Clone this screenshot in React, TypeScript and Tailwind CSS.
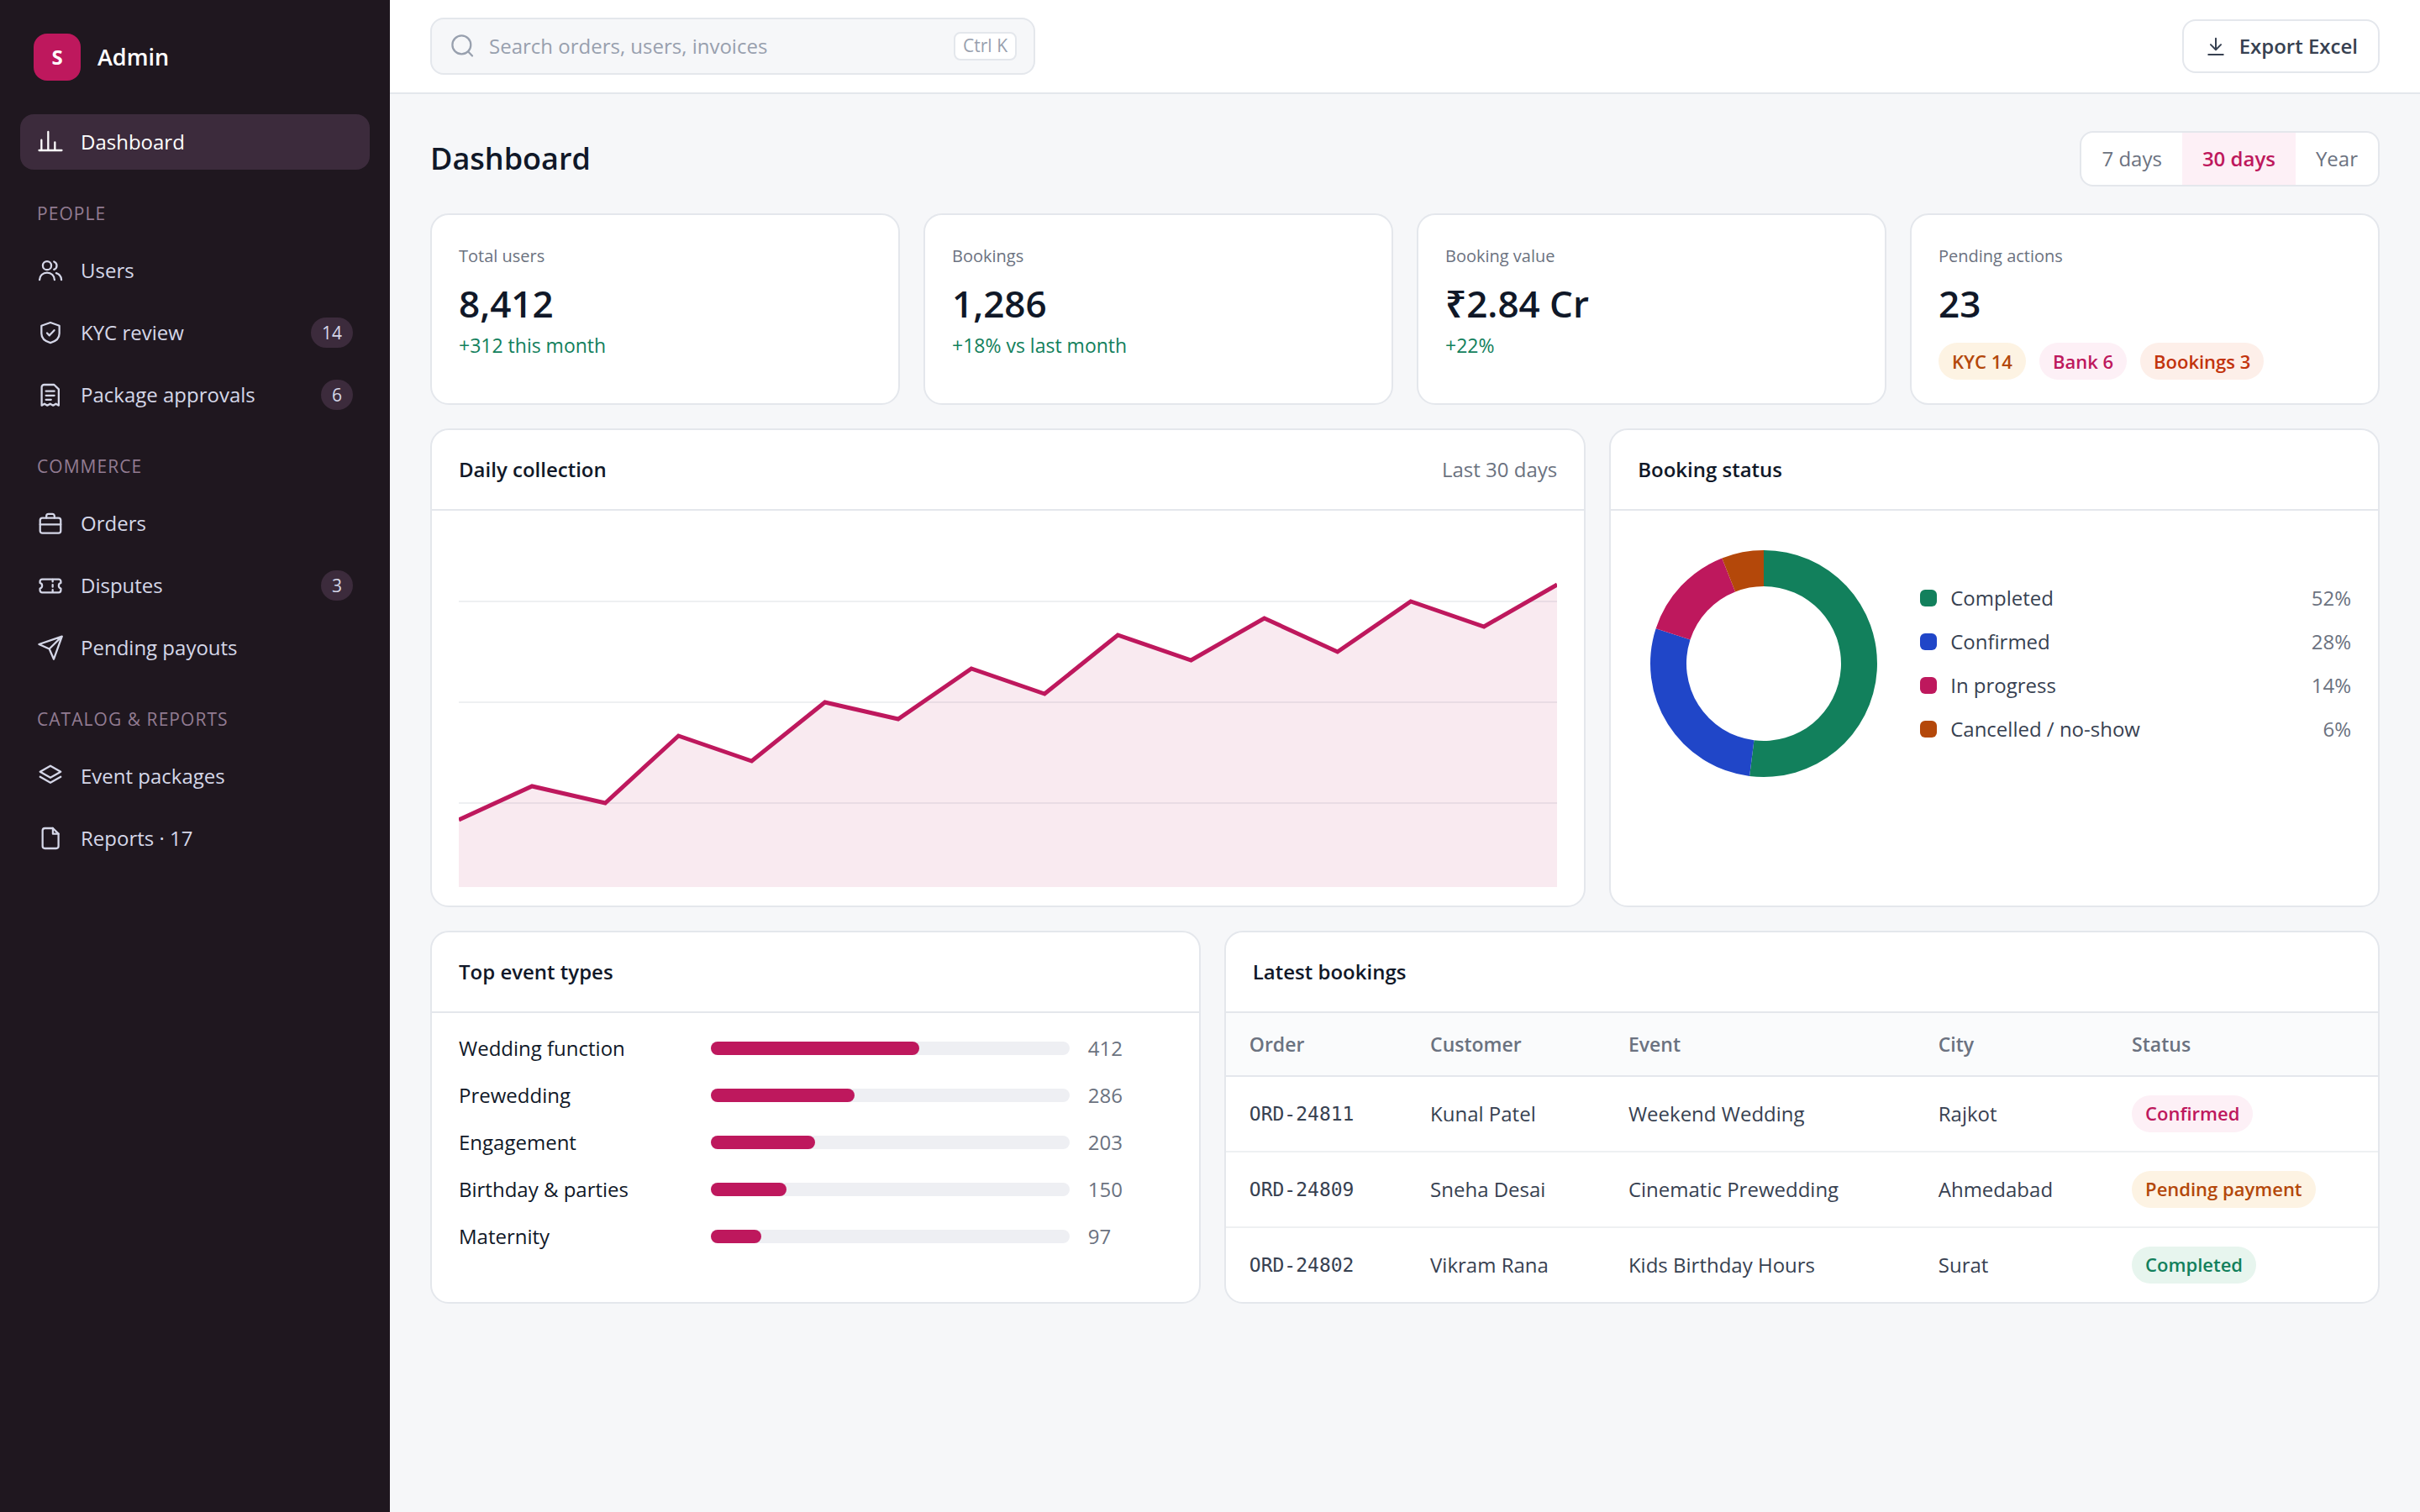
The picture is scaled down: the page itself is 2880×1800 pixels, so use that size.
import React from "react";

type IconProps = {
    children: React.ReactNode;
    className?: string;
};

const Icon: React.FC<IconProps> = ({ children, className = "size-8" }) => (
    <svg
        viewBox="0 0 24 24"
        fill="none"
        stroke="currentColor"
        strokeWidth={1.7}
        strokeLinecap="round"
        strokeLinejoin="round"
        className={`${className} shrink-0`}
        aria-hidden="true"
    >
        {children}
    </svg>
);

const icons = {
    dashboard: (
        <Icon>
            <path d="M1.9 19.5h20.2M4 19.5v-9.2M10 19.5V3M16 19.5v-7.3" />
        </Icon>
    ),
    users: (
        <Icon>
            <circle cx="9" cy="7.6" r="3.8" />
            <path d="M2.3 20.4c0-3.7 3-6.5 6.7-6.5s6.7 2.8 6.7 6.5M15.2 4.1a3.8 3.8 0 0 1 0 7.1M17.2 14.3c2.7.9 4.6 3.3 4.6 6.1" />
        </Icon>
    ),
    shield: (
        <Icon>
            <path d="M12 3l8 2.8v7c0 4.3-3.4 7.1-8 8.3-4.6-1.2-8-4-8-8.3v-7z" />
            <path d="M9 12.4l2.1 2.1 4.3-4.6" />
        </Icon>
    ),
    receipt: (
        <Icon>
            <path d="M4.2 21.5V5.2A2.2 2.2 0 0 1 6.4 3h8.9l4.1 4v14.5l-2.5-1.5-2.5 1.5-2.6-1.5-2.6 1.5-2.5-1.5z" />
            <path d="M8 8.8h7.5M8 12.6h7.5M8 16.4h4.6" />
        </Icon>
    ),
    briefcase: (
        <Icon>
            <rect x="2.8" y="7.2" width="18.4" height="13.6" rx="2" />
            <path d="M8.4 7.2V5.4a1.8 1.8 0 0 1 1.8-1.8h3.6a1.8 1.8 0 0 1 1.8 1.8v1.8M2.8 13h18.4" />
        </Icon>
    ),
    ticket: (
        <Icon>
            <path d="M4.6 6.4h14.8a1.9 1.9 0 0 1 1.9 1.9v1.4a2.6 2.6 0 0 0 0 5v1.7a1.9 1.9 0 0 1-1.9 1.9H4.6a1.9 1.9 0 0 1-1.9-1.9v-1.7a2.6 2.6 0 0 0 0-5V8.3a1.9 1.9 0 0 1 1.9-1.9z" />
            <path d="M14 6.6v2M14 11.3v2M14 15.9v2" />
        </Icon>
    ),
    send: (
        <Icon>
            <path d="M22.3 2L15 22.3l-4-9.2L1.8 9zM22.3 2L11 13.1" />
        </Icon>
    ),
    layers: (
        <Icon>
            <path d="M12 2.8L21.2 8 12 13.3 2.8 8z" />
            <path d="M2.8 12.6l9.2 5.2 9.2-5.2" />
        </Icon>
    ),
    file: (
        <Icon>
            <path d="M14.2 3H7a2 2 0 0 0-2 2v14a2 2 0 0 0 2 2h10.2a2 2 0 0 0 2-2V8z" />
            <path d="M14.2 3v5h5" />
        </Icon>
    ),
    search: (
        <Icon>
            <circle cx="11.5" cy="10.8" r="8.2" />
            <path d="M17.4 16.9l3.6 3.7" />
        </Icon>
    ),
    download: (
        <Icon className="size-7">
            <path d="M12 4v11.5M6.8 10.4l5.2 5.2 5.2-5.2M4.5 20.5h15" />
        </Icon>
    ),
};

type NavEntry = {
    label: string;
    icon: keyof typeof icons;
    badge?: number;
    active?: boolean;
};

type NavGroup = {
    title?: string;
    items: NavEntry[];
};

const navGroups: NavGroup[] = [
    { items: [{ label: "Dashboard", icon: "dashboard", active: true }] },
    {
        title: "People",
        items: [
            { label: "Users", icon: "users" },
            { label: "KYC review", icon: "shield", badge: 14 },
            { label: "Package approvals", icon: "receipt", badge: 6 },
        ],
    },
    {
        title: "Commerce",
        items: [
            { label: "Orders", icon: "briefcase" },
            { label: "Disputes", icon: "ticket", badge: 3 },
            { label: "Pending payouts", icon: "send" },
        ],
    },
    {
        title: "Catalog & reports",
        items: [
            { label: "Event packages", icon: "layers" },
            { label: "Reports · 17", icon: "file" },
        ],
    },
];

const toneStyles = {
    amber: "bg-[#fdf3e3] text-[#b4480a]",
    pink: "bg-[#fdf0f6] text-[#be185d]",
    red: "bg-[#fdefe9] text-[#c2330c]",
    green: "bg-[#e7f5ee] text-[#12805c]",
};

type Tone = keyof typeof toneStyles;

const Pill: React.FC<{ tone: Tone; children: React.ReactNode }> = ({ tone, children }) => (
    <span className={`inline-flex h-11 items-center rounded-full px-4 text-[22px] font-semibold whitespace-nowrap ${toneStyles[tone]}`}>
        {children}
    </span>
);

const stats = [
    { label: "Total users", value: "8,412", change: "+312 this month" },
    { label: "Bookings", value: "1,286", change: "+18% vs last month" },
    { label: "Booking value", value: "₹2.84 Cr", change: "+22%" },
];

const periods = ["7 days", "30 days", "Year"];

const collection = [340, 300, 320, 240, 270, 200, 220, 160, 190, 120, 150, 100, 140, 80, 110, 60];

const statuses = [
    { label: "Completed", share: 52, fill: "fill-[#12805c]", swatch: "bg-[#12805c]" },
    { label: "Confirmed", share: 28, fill: "fill-[#2046c8]", swatch: "bg-[#2046c8]" },
    { label: "In progress", share: 14, fill: "fill-[#be185d]", swatch: "bg-[#be185d]" },
    { label: "Cancelled / no-show", share: 6, fill: "fill-[#b4480a]", swatch: "bg-[#b4480a]" },
];

const eventTypes = [
    { label: "Wedding function", count: 412, width: 58 },
    { label: "Prewedding", count: 286, width: 40 },
    { label: "Engagement", count: 203, width: 29 },
    { label: "Birthday & parties", count: 150, width: 21 },
    { label: "Maternity", count: 97, width: 14 },
];

type Booking = {
    id: string;
    customer: string;
    event: string;
    city: string;
    status: string;
    tone: Tone;
};

const bookings: Booking[] = [
    { id: "ORD-24811", customer: "Kunal Patel", event: "Weekend Wedding", city: "Rajkot", status: "Confirmed", tone: "pink" },
    { id: "ORD-24809", customer: "Sneha Desai", event: "Cinematic Prewedding", city: "Ahmedabad", status: "Pending payment", tone: "amber" },
    { id: "ORD-24802", customer: "Vikram Rana", event: "Kids Birthday Hours", city: "Surat", status: "Completed", tone: "green" },
];

const Sidebar = () => (
    <aside className="w-[464px] shrink-0 bg-[#1f171f] px-6 pt-10">
        <div className="flex items-center gap-5 px-4">
            <div className="flex size-14 items-center justify-center rounded-2xl bg-[#be185d] text-2xl font-bold text-white">S</div>
            <span className="text-[27px] font-semibold text-white">Admin</span>
        </div>
        <nav className="mt-10">
            {navGroups.map((group) => (
                <div key={group.items[0].label}>
                    {group.title && (
                        <h2 className="px-5 pt-[34px] pb-[17px] text-[21px] leading-9 tracking-wider text-[#927c92] uppercase">{group.title}</h2>
                    )}
                    <ul className="flex flex-col gap-2">
                        {group.items.map((item) => (
                            <li key={item.label}>
                                <a
                                    href="#"
                                    aria-current={item.active ? "page" : undefined}
                                    className={`flex h-[66px] items-center gap-5 rounded-2xl px-5 text-2xl ${
                                        item.active ? "bg-[#3c2b3c] text-white" : "text-[#d5d7e8]"
                                    }`}
                                >
                                    {icons[item.icon]}
                                    {item.label}
                                    {item.badge && (
                                        <span className="ml-auto flex h-9 items-center rounded-full bg-[#3c2b3c] px-[13px] text-[21px]">{item.badge}</span>
                                    )}
                                </a>
                            </li>
                        ))}
                    </ul>
                </div>
            ))}
        </nav>
    </aside>
);

const Topbar = () => (
    <header className="flex h-28 items-center justify-between border-b-2 border-[#e4e7ec] bg-white px-12">
        <label className="flex h-[68px] w-[720px] items-center gap-4 rounded-2xl border-2 border-[#e4e7ec] bg-[#f6f7f9] px-5 text-[#98a0ae]">
            {icons.search}
            <input
                type="search"
                aria-label="Search"
                placeholder="Search orders, users, invoices"
                className="min-w-0 flex-1 bg-transparent text-2xl text-[#374151] outline-none placeholder:text-[#98a0ae]"
            />
            <kbd className="flex h-[34px] items-center rounded-lg border-2 border-[#e4e7ec] bg-white px-[9px] font-[inherit] text-[21px]">Ctrl K</kbd>
        </label>
        <button className="flex h-16 items-center gap-3.5 rounded-2xl border-2 border-[#e4e7ec] bg-white px-6 text-2xl font-semibold text-[#374151]">
            {icons.download}
            Export Excel
        </button>
    </header>
);

const Card: React.FC<{ title: string; note?: string; children: React.ReactNode }> = ({ title, note, children }) => (
    <section className="overflow-hidden rounded-[22px] border-2 border-[#e4e7ec] bg-white">
        <div className="flex h-24 items-center justify-between border-b-2 border-[#e4e7ec] px-8 text-2xl">
            <h2 className="font-semibold text-[#101828]">{title}</h2>
            {note && <span className="text-[#6b7280]">{note}</span>}
        </div>
        {children}
    </section>
);

const CollectionChart = () => {
    const line = collection.map((y, i) => `${i * 100},${y}`).join(" ");
    return (
        <svg viewBox="0 0 1500 420" preserveAspectRatio="none" className="block h-[420px] w-full" role="img" aria-label="Daily collection">
            <path d="M0 80H1500M0 200H1500M0 320H1500" className="stroke-[#eef0f2]" strokeWidth={2} fill="none" />
            <polygon points={`0,420 ${line} 1500,420`} className="fill-[#be185d]/9" />
            <polyline points={line} fill="none" className="stroke-[#be185d]" strokeWidth={5} vectorEffect="non-scaling-stroke" />
        </svg>
    );
};

const OUTER = 135;
const INNER = 92;

// point on the ring, measured clockwise from the top, share in percent
const ringPoint = (radius: number, share: number) => {
    const angle = (share / 100) * 2 * Math.PI;
    return `${150 + radius * Math.sin(angle)} ${150 - radius * Math.cos(angle)}`;
};

const StatusDonut = () => {
    let end = 0;
    return (
        <svg viewBox="0 0 300 300" className="size-[300px] shrink-0" role="img" aria-label="Booking status">
            {statuses.map((s) => {
                const start = end;
                end += s.share;
                const large = s.share > 50 ? 1 : 0;
                return (
                    <path
                        key={s.label}
                        className={s.fill}
                        d={`M${ringPoint(OUTER, start)}A${OUTER} ${OUTER} 0 ${large} 1 ${ringPoint(OUTER, end)}L${ringPoint(INNER, end)}A${INNER} ${INNER} 0 ${large} 0 ${ringPoint(INNER, start)}z`}
                    />
                );
            })}
        </svg>
    );
};

const BookingsTable = () => (
    <table className="w-full table-fixed text-left text-2xl text-[#374151]">
        <colgroup>
            <col className="w-[15.7%]" />
            <col className="w-[17.2%]" />
            <col className="w-[26.9%]" />
            <col className="w-[16.8%]" />
            <col />
        </colgroup>
        <thead>
            <tr className="h-[75px] border-b-2 border-[#e4e7ec] bg-[#fafbfc] text-[23px] text-[#6b7280]">
                {["Order", "Customer", "Event", "City", "Status"].map((name) => (
                    <th key={name} className="pl-7 font-semibold">
                        {name}
                    </th>
                ))}
            </tr>
        </thead>
        <tbody>
            {bookings.map((b) => (
                <tr key={b.id} className="h-[90px] border-b-2 border-[#eef0f2] last:h-[89px] last:border-0">
                    <td className="pl-7 font-['DejaVu_Sans_Mono',monospace] text-[23px]">{b.id}</td>
                    <td className="pl-7">{b.customer}</td>
                    <td className="pl-7">{b.event}</td>
                    <td className="pl-7">{b.city}</td>
                    <td className="pl-7">
                        <div className="flex">
                            <Pill tone={b.tone}>{b.status}</Pill>
                        </div>
                    </td>
                </tr>
            ))}
        </tbody>
    </table>
);

const App: React.FC = () => {
    const [period, setPeriod] = React.useState("30 days");

    return (
        <div className="flex min-h-screen bg-[#f6f7f9] font-['Open_Sans','Noto_Sans',sans-serif] text-[#101828]">
            <Sidebar />
            <div className="min-w-0 flex-1">
                <Topbar />
                <main className="flex flex-col gap-7 px-12 pt-11 pb-12">
                    <div className="mb-1 flex items-center justify-between">
                        <h1 className="text-4xl font-semibold">Dashboard</h1>
                        <div className="flex h-[66px] overflow-hidden rounded-2xl border-2 border-[#e4e7ec] bg-white text-2xl">
                            {periods.map((p) => (
                                <button
                                    key={p}
                                    onClick={() => setPeriod(p)}
                                    className={`px-6 ${p === period ? "bg-[#fdf0f6] font-semibold text-[#be185d]" : "text-[#6b7280]"}`}
                                >
                                    {p}
                                </button>
                            ))}
                        </div>
                    </div>

                    <div className="grid grid-cols-4 gap-7">
                        {stats.map((s) => (
                            <section key={s.label} className="rounded-[22px] border-2 border-[#e4e7ec] bg-white px-8 py-7">
                                <h2 className="text-[20px] leading-[42px] text-[#6b7280]">{s.label}</h2>
                                <p className="text-[44px] leading-[70px] font-semibold">{s.value}</p>
                                <p className="text-[23px] leading-[30px] text-[#12805c]">{s.change}</p>
                            </section>
                        ))}
                        <section className="rounded-[22px] border-2 border-[#e4e7ec] bg-white px-8 py-7">
                            <h2 className="text-[20px] leading-[42px] text-[#6b7280]">Pending actions</h2>
                            <p className="text-[44px] leading-[70px] font-semibold">23</p>
                            <div className="mt-3 flex gap-4">
                                <Pill tone="amber">KYC 14</Pill>
                                <Pill tone="pink">Bank 6</Pill>
                                <Pill tone="red">Bookings 3</Pill>
                            </div>
                        </section>
                    </div>

                    <div className="grid grid-cols-[3fr_2fr] gap-7">
                        <Card title="Daily collection" note="Last 30 days">
                            <div className="px-8 pt-7 pb-[22px]">
                                <CollectionChart />
                            </div>
                        </Card>
                        <Card title="Booking status">
                            <div className="flex items-center gap-9 px-8 py-8">
                                <StatusDonut />
                                <ul className="flex flex-1 flex-col text-2xl">
                                    {statuses.map((s) => (
                                        <li key={s.label} className="flex h-[52px] items-center gap-4 text-[#374151]">
                                            <span className={`size-5 rounded-md ${s.swatch}`} />
                                            {s.label}
                                            <span className="ml-auto text-[#6b7280]">{s.share}%</span>
                                        </li>
                                    ))}
                                </ul>
                            </div>
                        </Card>
                    </div>

                    <div className="grid grid-cols-[2fr_3fr] gap-7">
                        <Card title="Top event types">
                            <ul className="px-8 py-3.5 text-2xl">
                                {eventTypes.map((e) => (
                                    <li key={e.label} className="grid h-14 grid-cols-[278px_1fr_100px] items-center gap-[22px]">
                                        <span>{e.label}</span>
                                        <div className="h-4 rounded-full bg-[#eeeff3]">
                                            <div className="h-4 rounded-full bg-[#be185d]" style={{ width: `${e.width}%` }} />
                                        </div>
                                        <span className="text-[#6b7280]">{e.count}</span>
                                    </li>
                                ))}
                            </ul>
                        </Card>
                        <Card title="Latest bookings">
                            <BookingsTable />
                        </Card>
                    </div>
                </main>
            </div>
        </div>
    );
};

export default App;
